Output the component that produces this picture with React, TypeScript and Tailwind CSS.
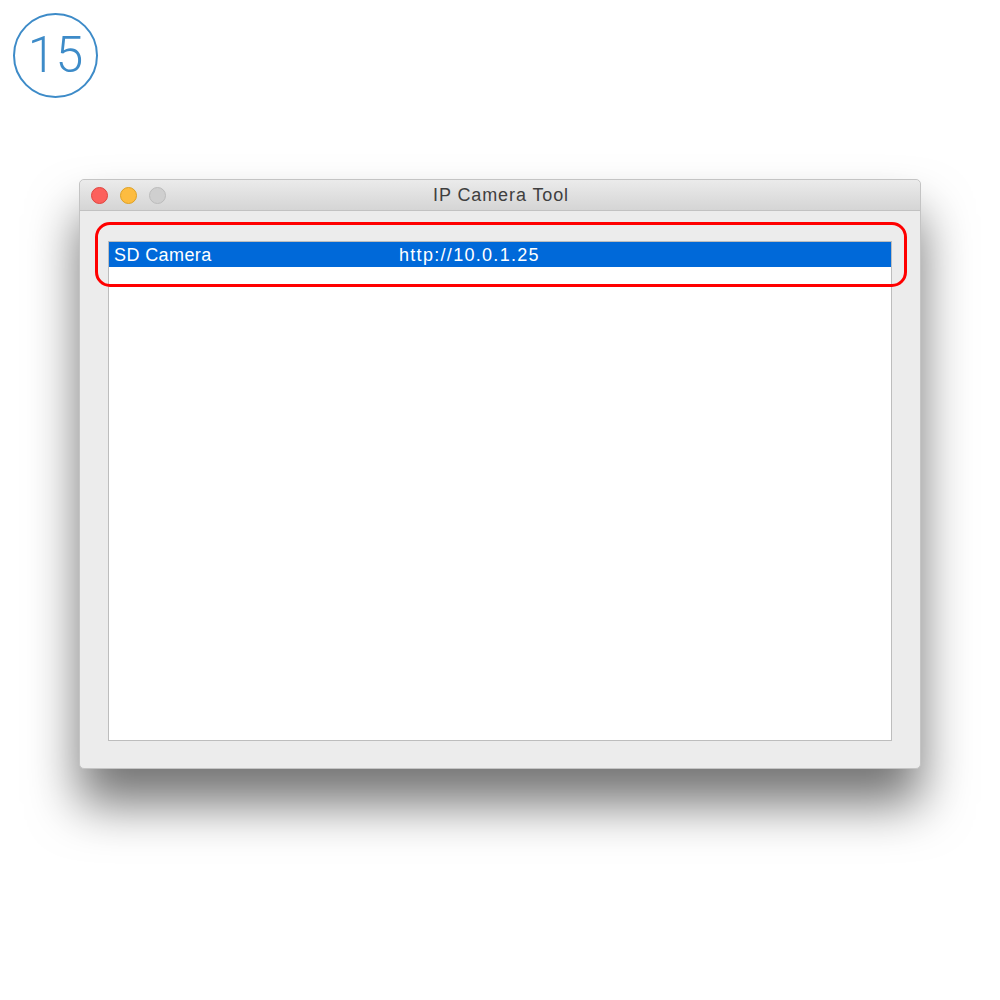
import React from 'react';

const cameras = [{ name: 'SD Camera', url: 'http://10.0.1.25' }];

export default function App() {
    return (
        <div className="w-[1000px] h-[1000px] bg-white relative overflow-hidden" style={{ fontFamily: '"Liberation Sans", Arial, sans-serif' }}>
            {/* step badge */}
            <div className="absolute left-[13px] top-[13px] w-[85px] h-[85px] rounded-full border-[2px] border-[#3d8bc8] flex items-center justify-center">
                <span className="text-[#3d8bc8] text-[50px] font-light leading-none -mt-[2px]" style={{ fontFamily: 'Roboto, sans-serif' }}>15</span>
            </div>

            <div className="pt-[179px] pl-[79px]">
                <div className="w-[842px] h-[590px] bg-[#ececec] rounded-[5px] border border-[#c4c4c4] shadow-[0_35px_50px_rgba(0,0,0,0.55)] flex flex-col">
                    {/* title bar */}
                    <div className="h-[31px] shrink-0 rounded-t-[5px] bg-gradient-to-b from-[#ebebeb] to-[#d5d5d5] border-b border-[#c2c2c2] relative flex items-center justify-center">
                        <div className="absolute left-[11px] top-[7px] flex gap-[12px]">
                            <span className="w-[17px] h-[17px] rounded-full bg-[#fc605c] border border-[#e0443e]"></span>
                            <span className="w-[17px] h-[17px] rounded-full bg-[#fdbc40] border border-[#dea123]"></span>
                            <span className="w-[17px] h-[17px] rounded-full bg-[#cfcfcf] border border-[#bcbcbc]"></span>
                        </div>
                        <span className="text-[18px] tracking-[0.9px] text-[#3f3f3f] pl-[2px]">IP Camera Tool</span>
                    </div>

                    {/* list */}
                    <div className="flex-1 pt-[30px] px-[28px] pb-[28px]">
                        <div className="relative h-[500px] w-[784px] bg-white border border-[#bdbdbd]">
                            {cameras.map((c) => (
                                <div key={c.url} className="h-[25px] bg-[#0069d9] text-white text-[18px] flex items-center pl-[5px] pt-[1px]">
                                    <span className="w-[285px] tracking-[0.4px]">{c.name}</span>
                                    <span className="tracking-[1.3px]">{c.url}</span>
                                </div>
                            ))}
                            {/* highlight annotation */}
                            <div className="absolute left-[-14px] top-[-20px] w-[812px] h-[65px] rounded-[15px] border-[3px] border-[#ff0000]"></div>
                        </div>
                    </div>
                </div>
            </div>
        </div>
    );
}
